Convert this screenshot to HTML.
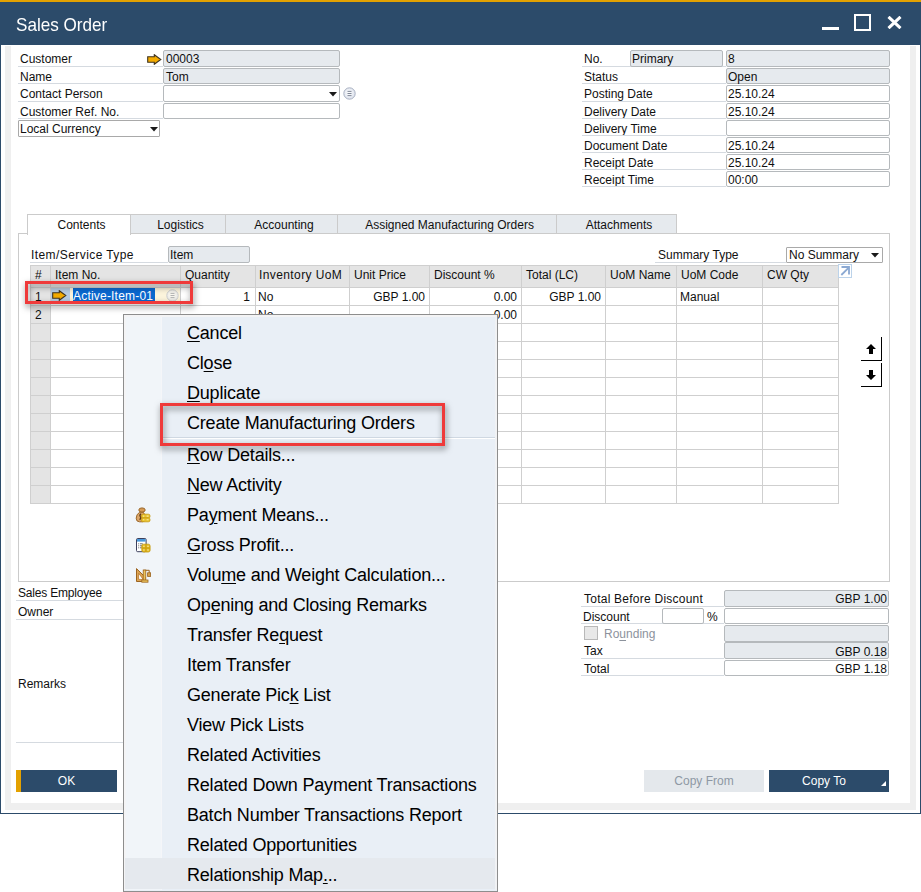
<!DOCTYPE html>
<html><head><meta charset="utf-8"><style>
html,body{margin:0;padding:0;width:921px;height:892px;overflow:hidden;background:#fff}
body>div,body>svg{position:absolute}
.t{font-family:"Liberation Sans",sans-serif;font-size:12px;line-height:14px;color:#101010;white-space:nowrap}
.m{font-family:"Liberation Sans",sans-serif;font-size:18px;line-height:20px;color:#000;white-space:nowrap;letter-spacing:-0.2px}
u{text-decoration-thickness:1px;text-underline-offset:2px}
</style></head><body>
<div style="left:0px;top:0px;width:921px;height:2px;background:#e3a100"></div>
<div style="left:0px;top:2px;width:921px;height:43px;background:#2c4b6a"></div>
<div class="t" style="left:16px;top:13px;font-size:19px;line-height:24px;color:#fff;transform:scaleX(0.9);transform-origin:0 0">Sales Order</div>
<div style="left:822px;top:27px;width:17px;height:3px;background:#fff"></div>
<div style="left:854px;top:14px;width:13px;height:13px;border:2px solid #fff"></div>
<svg style="position:absolute;left:887px;top:16px" width="15" height="13" viewBox="0 0 15 13"><path d="M1.5 0.8 L13.5 12.2 M13.5 0.8 L1.5 12.2" stroke="#fff" stroke-width="3"/></svg>
<div style="left:0px;top:45px;width:1px;height:769px;background:#2c4b6a"></div>
<div style="left:920px;top:45px;width:1px;height:769px;background:#2c4b6a"></div>
<div style="left:0px;top:813px;width:921px;height:1px;background:#2c4b6a"></div>
<div style="left:5px;top:46px;width:6px;height:764px;background:#efefef"></div>
<div style="left:910px;top:46px;width:6px;height:764px;background:#efefef"></div>
<div style="left:5px;top:803px;width:911px;height:7px;background:#efefef"></div>
<div class="t" style="left:20px;top:52px;">Customer</div>
<div style="left:18px;top:66px;width:145px;height:1px;background:#d5dae0"></div>
<div style="left:163px;top:50px;width:175px;height:15px;border:1px solid #b5b9bc;border-radius:2px;background:#e6eaee"></div>
<div class="t" style="left:166px;top:52px;">00003</div>
<div class="t" style="left:20px;top:70px;">Name</div>
<div style="left:18px;top:83px;width:145px;height:1px;background:#d5dae0"></div>
<div style="left:163px;top:68px;width:175px;height:14px;border:1px solid #b5b9bc;border-radius:2px;background:#e6eaee"></div>
<div class="t" style="left:166px;top:70px;">Tom</div>
<div class="t" style="left:20px;top:87px;">Contact Person</div>
<div style="left:18px;top:101px;width:145px;height:1px;background:#d5dae0"></div>
<div style="left:163px;top:85px;width:175px;height:15px;border:1px solid #b5b9bc;border-radius:2px;background:#fff"></div>
<div class="t" style="left:20px;top:105px;">Customer Ref. No.</div>
<div style="left:18px;top:118px;width:145px;height:1px;background:#d5dae0"></div>
<div style="left:163px;top:103px;width:175px;height:14px;border:1px solid #b5b9bc;border-radius:2px;background:#fff"></div>
<svg style="position:absolute;left:147px;top:54px" width="15" height="11" viewBox="0 0 15 11"><path d="M0.7 2.7 H7.3 V0.7 L13.8 5.5 L7.3 10.3 V8.3 H0.7 Z" fill="#f3ab00" stroke="#3e3320" stroke-width="1.1" stroke-linejoin="miter"/></svg>
<svg style="position:absolute;left:329px;top:92px" width="8" height="5" viewBox="0 0 8 5"><path d="M0 0 H8 L4 4.5 Z" fill="#1a1a1a"/></svg>
<svg style="position:absolute;left:343px;top:87px" width="13" height="13" viewBox="0 0 13 13"><defs><radialGradient id="lg34387" cx="0.45" cy="0.45" r="0.6"><stop offset="0" stop-color="#ffffff"/><stop offset="1" stop-color="#d8deea"/></radialGradient></defs><circle cx="6.5" cy="6.5" r="5.7" fill="url(#lg34387)" stroke="#a9b1c2" stroke-width="1"/><path d="M4.5 4.4 H8.5 M4.5 6.5 H8.5 M4.5 8.6 H8.5" stroke="#808898" stroke-width="1"/></svg>
<div style="left:18px;top:120px;width:140px;height:15px;border:1px solid #a9a9a9;border-radius:1px;background:#fff"></div>
<div class="t" style="left:20px;top:122px;">Local Currency</div>
<svg style="position:absolute;left:150px;top:127px" width="8" height="5" viewBox="0 0 8 5"><path d="M0 0 H8 L4 4.5 Z" fill="#1a1a1a"/></svg>
<div class="t" style="left:584px;top:52px;">No.</div>
<div style="left:582px;top:66px;width:144px;height:1px;background:#d5dae0"></div>
<div style="left:726px;top:50px;width:162px;height:15px;border:1px solid #b5b9bc;border-radius:2px;background:#e6eaee"></div>
<div class="t" style="left:728px;top:52px;">8</div>
<div class="t" style="left:584px;top:70px;">Status</div>
<div style="left:582px;top:83px;width:144px;height:1px;background:#d5dae0"></div>
<div style="left:726px;top:68px;width:162px;height:14px;border:1px solid #b5b9bc;border-radius:2px;background:#e6eaee"></div>
<div class="t" style="left:728px;top:70px;">Open</div>
<div class="t" style="left:584px;top:87px;">Posting Date</div>
<div style="left:582px;top:101px;width:144px;height:1px;background:#d5dae0"></div>
<div style="left:726px;top:85px;width:162px;height:15px;border:1px solid #b5b9bc;border-radius:2px;background:#fff"></div>
<div class="t" style="left:728px;top:87px;">25.10.24</div>
<div class="t" style="left:584px;top:105px;">Delivery Date</div>
<div style="left:582px;top:118px;width:144px;height:1px;background:#d5dae0"></div>
<div style="left:726px;top:103px;width:162px;height:14px;border:1px solid #b5b9bc;border-radius:2px;background:#fff"></div>
<div class="t" style="left:728px;top:105px;">25.10.24</div>
<div class="t" style="left:584px;top:122px;">Delivery Time</div>
<div style="left:582px;top:135px;width:144px;height:1px;background:#d5dae0"></div>
<div style="left:726px;top:120px;width:162px;height:14px;border:1px solid #b5b9bc;border-radius:2px;background:#fff"></div>
<div class="t" style="left:584px;top:139px;">Document Date</div>
<div style="left:582px;top:152px;width:144px;height:1px;background:#d5dae0"></div>
<div style="left:726px;top:137px;width:162px;height:14px;border:1px solid #b5b9bc;border-radius:2px;background:#fff"></div>
<div class="t" style="left:728px;top:139px;">25.10.24</div>
<div class="t" style="left:584px;top:156px;">Receipt Date</div>
<div style="left:582px;top:169px;width:144px;height:1px;background:#d5dae0"></div>
<div style="left:726px;top:154px;width:162px;height:14px;border:1px solid #b5b9bc;border-radius:2px;background:#fff"></div>
<div class="t" style="left:728px;top:156px;">25.10.24</div>
<div class="t" style="left:584px;top:173px;">Receipt Time</div>
<div style="left:582px;top:186px;width:144px;height:1px;background:#d5dae0"></div>
<div style="left:726px;top:171px;width:162px;height:14px;border:1px solid #b5b9bc;border-radius:2px;background:#fff"></div>
<div class="t" style="left:728px;top:173px;">00:00</div>
<div style="left:630px;top:50px;width:91px;height:15px;border:1px solid #b5b9bc;border-radius:2px;background:#e6eaee"></div>
<div class="t" style="left:632px;top:52px;">Primary</div>
<div style="left:18px;top:233px;width:870px;height:347px;border:1px solid #cbcbcb;background:#fff"></div>
<div style="left:27px;top:214px;width:102px;height:20px;border:1px solid #cbcbcb;border-bottom:none;background:#fff"></div>
<div class="t" style="left:30px;top:218px;width:103px;text-align:center;">Contents</div>
<div style="left:130px;top:214px;width:94px;height:18px;border:1px solid #cbcbcb;background:#e6eaee"></div>
<div class="t" style="left:133px;top:218px;width:95px;text-align:center;">Logistics</div>
<div style="left:225px;top:214px;width:111px;height:18px;border:1px solid #cbcbcb;background:#e6eaee"></div>
<div class="t" style="left:228px;top:218px;width:112px;text-align:center;">Accounting</div>
<div style="left:337px;top:214px;width:218px;height:18px;border:1px solid #cbcbcb;background:#e6eaee"></div>
<div class="t" style="left:340px;top:218px;width:219px;text-align:center;">Assigned Manufacturing Orders</div>
<div style="left:556px;top:214px;width:119px;height:18px;border:1px solid #cbcbcb;background:#e6eaee"></div>
<div class="t" style="left:559px;top:218px;width:120px;text-align:center;">Attachments</div>
<div class="t" style="left:31px;top:248px;letter-spacing:0.42px">Item/Service Type</div>
<div style="left:30px;top:262px;width:138px;height:1px;background:#d5dae0"></div>
<div style="left:168px;top:246px;width:80px;height:15px;border:1px solid #b5b9bc;border-radius:2px;background:#e6eaee"></div>
<div class="t" style="left:170px;top:248px;">Item</div>
<div class="t" style="left:658px;top:248px;">Summary Type</div>
<div style="left:655px;top:262px;width:131px;height:1px;background:#d5dae0"></div>
<div style="left:786px;top:247px;width:95px;height:14px;border:1px solid #a9a9a9;border-radius:1px;background:#fff"></div>
<div class="t" style="left:789px;top:248px;">No Summary</div>
<svg style="position:absolute;left:871px;top:253px" width="8" height="5" viewBox="0 0 8 5"><path d="M0 0 H8 L4 4.5 Z" fill="#1a1a1a"/></svg>
<div style="left:30px;top:265px;width:808px;height:22px;background:#e4e4e4"></div>
<div style="left:30px;top:287px;width:20px;height:216px;background:#e4e4e4"></div>
<div style="left:30px;top:265px;width:809px;height:1px;background:#cfcfcf"></div>
<div style="left:30px;top:287px;width:809px;height:1px;background:#cfcfcf"></div>
<div style="left:30px;top:305px;width:809px;height:1px;background:#cfcfcf"></div>
<div style="left:30px;top:323px;width:809px;height:1px;background:#cfcfcf"></div>
<div style="left:30px;top:341px;width:809px;height:1px;background:#cfcfcf"></div>
<div style="left:30px;top:359px;width:809px;height:1px;background:#cfcfcf"></div>
<div style="left:30px;top:377px;width:809px;height:1px;background:#cfcfcf"></div>
<div style="left:30px;top:395px;width:809px;height:1px;background:#cfcfcf"></div>
<div style="left:30px;top:413px;width:809px;height:1px;background:#cfcfcf"></div>
<div style="left:30px;top:431px;width:809px;height:1px;background:#cfcfcf"></div>
<div style="left:30px;top:449px;width:809px;height:1px;background:#cfcfcf"></div>
<div style="left:30px;top:467px;width:809px;height:1px;background:#cfcfcf"></div>
<div style="left:30px;top:485px;width:809px;height:1px;background:#cfcfcf"></div>
<div style="left:30px;top:503px;width:809px;height:1px;background:#cfcfcf"></div>
<div style="left:30px;top:265px;width:1px;height:239px;background:#cfcfcf"></div>
<div style="left:50px;top:265px;width:1px;height:239px;background:#cfcfcf"></div>
<div style="left:180px;top:265px;width:1px;height:239px;background:#cfcfcf"></div>
<div style="left:255px;top:265px;width:1px;height:239px;background:#cfcfcf"></div>
<div style="left:349px;top:265px;width:1px;height:239px;background:#cfcfcf"></div>
<div style="left:429px;top:265px;width:1px;height:239px;background:#cfcfcf"></div>
<div style="left:521px;top:265px;width:1px;height:239px;background:#cfcfcf"></div>
<div style="left:605px;top:265px;width:1px;height:239px;background:#cfcfcf"></div>
<div style="left:676px;top:265px;width:1px;height:239px;background:#cfcfcf"></div>
<div style="left:762px;top:265px;width:1px;height:239px;background:#cfcfcf"></div>
<div style="left:838px;top:265px;width:1px;height:239px;background:#cfcfcf"></div>
<div class="t" style="left:35px;top:268px;">#</div>
<div class="t" style="left:55px;top:268px;">Item No.</div>
<div class="t" style="left:185px;top:268px;">Quantity</div>
<div class="t" style="left:259px;top:268px;letter-spacing:0.4px">Inventory UoM</div>
<div class="t" style="left:354px;top:268px;">Unit Price</div>
<div class="t" style="left:434px;top:268px;">Discount %</div>
<div class="t" style="left:526px;top:268px;">Total (LC)</div>
<div class="t" style="left:610px;top:268px;">UoM Name</div>
<div class="t" style="left:681px;top:268px;">UoM Code</div>
<div class="t" style="left:767px;top:268px;">CW Qty</div>
<div class="t" style="left:35px;top:290px;">1</div>
<div class="t" style="left:35px;top:308px;">2</div>
<div style="left:51px;top:288px;width:19px;height:13px;background:#b7cce2"></div>
<div style="left:70px;top:288px;width:110px;height:13px;background:#fcf4dc"></div>
<svg style="position:absolute;left:52px;top:290px" width="15" height="11" viewBox="0 0 15 11"><path d="M0.7 2.7 H7.3 V0.7 L13.8 5.5 L7.3 10.3 V8.3 H0.7 Z" fill="#f3ab00" stroke="#3e3320" stroke-width="1.1" stroke-linejoin="miter"/></svg>
<div style="left:73px;top:288px;width:82px;height:13px;background:#0a68d0"></div>
<div class="t" style="left:73px;top:289px;color:#fff;letter-spacing:0.2px">Active-Item-01</div>
<div style="left:166px;top:289px;width:13px;height:13px;opacity:0.6">
<svg style="position:absolute;left:0px;top:0px" width="13" height="13" viewBox="0 0 13 13"><defs><radialGradient id="lg00" cx="0.45" cy="0.45" r="0.6"><stop offset="0" stop-color="#ffffff"/><stop offset="1" stop-color="#d8deea"/></radialGradient></defs><circle cx="6.5" cy="6.5" r="5.7" fill="url(#lg00)" stroke="#a9b1c2" stroke-width="1"/><path d="M4.5 4.4 H8.5 M4.5 6.5 H8.5 M4.5 8.6 H8.5" stroke="#808898" stroke-width="1"/></svg>
</div>
<div class="t" style="left:-50px;top:290px;width:300px;text-align:right;">1</div>
<div class="t" style="left:258px;top:290px;">No</div>
<div class="t" style="left:125px;top:290px;width:300px;text-align:right;">GBP 1.00</div>
<div class="t" style="left:217px;top:290px;width:300px;text-align:right;">0.00</div>
<div class="t" style="left:301px;top:290px;width:300px;text-align:right;">GBP 1.00</div>
<div class="t" style="left:680px;top:290px;">Manual</div>
<div class="t" style="left:258px;top:308px;">No</div>
<div class="t" style="left:217px;top:308px;width:300px;text-align:right;">0.00</div>
<svg style="position:absolute;left:838px;top:264px" width="14" height="14" viewBox="0 0 14 14"><rect x="0.5" y="0.5" width="13" height="13" fill="#fff" stroke="#bcd3ea"/><path d="M3.3 11 L10.5 3.8" stroke="#8aa8d2" stroke-width="1.8"/><path d="M3.5 3 H11 V10.5" stroke="#8aa8d2" stroke-width="1.8" fill="none"/></svg>
<div style="left:25px;top:281px;width:162px;height:17px;border:3px solid #ef3a3a;filter:drop-shadow(1px 3px 3px rgba(0,0,0,0.5))"></div>
<div style="left:881px;top:337px;width:1px;height:24px;background:#000"></div>
<div style="left:861px;top:360px;width:21px;height:1px;background:#000"></div>
<svg style="position:absolute;left:866px;top:344px" width="10" height="10" viewBox="0 0 10 10"><path d="M5 0 L10 5 H7 V10 H3 V5 H0 Z" fill="#000"/></svg>
<div style="left:881px;top:363px;width:1px;height:24px;background:#000"></div>
<div style="left:861px;top:386px;width:21px;height:1px;background:#000"></div>
<svg style="position:absolute;left:866px;top:370px" width="10" height="10" viewBox="0 0 10 10"><path d="M5 10 L10 5 H7 V0 H3 V5 H0 Z" fill="#000"/></svg>
<div class="t" style="left:18px;top:586px;letter-spacing:-0.2px">Sales Employee</div>
<div style="left:16px;top:600px;width:479px;height:1px;background:#d5dae0"></div>
<div class="t" style="left:18px;top:605px;">Owner</div>
<div style="left:16px;top:619px;width:479px;height:1px;background:#d5dae0"></div>
<div class="t" style="left:18px;top:677px;">Remarks</div>
<div style="left:16px;top:742px;width:479px;height:1px;background:#d5dae0"></div>
<div style="left:16px;top:770px;width:101px;height:22px;background:#2c4b6a"></div>
<div style="left:16px;top:770px;width:5px;height:22px;background:#e3a100"></div>
<div class="t" style="left:16px;top:774px;width:101px;text-align:center;color:#fff">OK</div>
<div class="t" style="left:584px;top:592px;letter-spacing:0.24px">Total Before Discount</div>
<div style="left:581px;top:606px;width:143px;height:1px;background:#d5dae0"></div>
<div style="left:724px;top:590px;width:163px;height:15px;border:1px solid #b5b9bc;border-radius:2px;background:#e6eaee"></div>
<div class="t" style="left:587px;top:592px;width:300px;text-align:right;">GBP 1.00</div>
<div class="t" style="left:583px;top:610px;">Discount</div>
<div style="left:581px;top:623px;width:143px;height:1px;background:#d5dae0"></div>
<div style="left:662px;top:608px;width:40px;height:14px;border:1px solid #b5b9bc;border-radius:2px;background:#fff"></div>
<div class="t" style="left:707px;top:610px;">%</div>
<div style="left:724px;top:608px;width:163px;height:14px;border:1px solid #b5b9bc;border-radius:2px;background:#fff"></div>
<div style="left:584px;top:626px;width:12px;height:12px;border:1px solid #b8b8b8;background:#e8e8e8"></div>
<div class="t" style="left:604px;top:627px;color:#8c929c">Ro<u>u</u>nding</div>
<div style="left:724px;top:625px;width:163px;height:15px;border:1px solid #b5b9bc;border-radius:2px;background:#e6eaee"></div>
<div class="t" style="left:584px;top:644px;">Tax</div>
<div style="left:581px;top:658px;width:143px;height:1px;background:#d5dae0"></div>
<div style="left:724px;top:642px;width:163px;height:15px;border:1px solid #b5b9bc;border-radius:2px;background:#e6eaee"></div>
<div class="t" style="left:587px;top:645px;width:300px;text-align:right;">GBP 0.18</div>
<div class="t" style="left:584px;top:662px;">Total</div>
<div style="left:581px;top:675px;width:143px;height:1px;background:#d5dae0"></div>
<div style="left:724px;top:660px;width:163px;height:14px;border:1px solid #b5b9bc;border-radius:2px;background:#fff"></div>
<div class="t" style="left:587px;top:662px;width:300px;text-align:right;">GBP 1.18</div>
<div style="left:644px;top:770px;width:120px;height:22px;background:#e4e8ec"></div>
<div class="t" style="left:644px;top:774px;width:120px;text-align:center;color:#8e98a4">Copy From</div>
<div style="left:769px;top:770px;width:120px;height:22px;background:#2c4b6a"></div>
<div class="t" style="left:764px;top:774px;width:120px;text-align:center;color:#fff">Copy To</div>
<svg style="position:absolute;left:881px;top:781px" width="5" height="5" viewBox="0 0 5 5"><path d="M5 0 V5 H0 Z" fill="#fff"/></svg>
<div style="left:123px;top:314px;width:373px;height:576px;border:1px solid #8d8d8d;background:#e9eff6"></div>
<div style="left:124px;top:315px;width:372px;height:2px;background:#f4f4f5"></div>
<div style="left:124px;top:315px;width:2px;height:575px;background:#f4f4f5"></div>
<div style="left:126px;top:317px;width:35px;height:573px;background:#f1f5f9"></div>
<div style="left:161px;top:317px;width:1px;height:573px;background:#f5f6f9"></div>
<div style="left:125px;top:858px;width:370px;height:31px;background:#e5e9ee"></div>
<div style="left:495px;top:315px;width:2px;height:575px;background:#f1f2f4"></div>
<div class="m" style="left:187px;top:323px"><u>C</u>ancel</div>
<div class="m" style="left:187px;top:353px">Cl<u>o</u>se</div>
<div class="m" style="left:187px;top:383px"><u>D</u>uplicate</div>
<div class="m" style="left:187px;top:413px">Create Manufacturing Orders</div>
<div class="m" style="left:187px;top:445px"><u>R</u>ow Details...</div>
<div class="m" style="left:187px;top:475px"><u>N</u>ew Activity</div>
<div class="m" style="left:187px;top:505px">Pa<u>y</u>ment Means...</div>
<div class="m" style="left:187px;top:535px"><u>G</u>ross Profit...</div>
<div class="m" style="left:187px;top:565px">Volu<u>m</u>e and Weight Calculation...</div>
<div class="m" style="left:187px;top:595px">Op<u>e</u>ning and Closing Remarks</div>
<div class="m" style="left:187px;top:625px">Transfer Re<u>q</u>uest</div>
<div class="m" style="left:187px;top:655px">Item Transfer</div>
<div class="m" style="left:187px;top:685px">Generate Pic<u>k</u> List</div>
<div class="m" style="left:187px;top:715px">View Pick Lists</div>
<div class="m" style="left:187px;top:745px">Related Activities</div>
<div class="m" style="left:187px;top:775px">Related Down Payment Transactions</div>
<div class="m" style="left:187px;top:805px">Batch Number Transactions Report</div>
<div class="m" style="left:187px;top:835px">Related Opportunities</div>
<div class="m" style="left:187px;top:865px">Relationship Map<u>.</u>..</div>
<div style="left:162px;top:437px;width:333px;height:1px;background:#cfd8e2"></div>
<div style="left:162px;top:438px;width:333px;height:1px;background:#ffffff"></div>
<svg style="position:absolute;left:135px;top:507px" width="16" height="16" viewBox="0 0 16 16">
<path d="M4.6 5.2 Q1.2 7.5 1.2 11.2 Q1.2 14.8 4.5 14.8 H8 Q10.5 14.5 10.5 10.8 Q10.3 7.4 8.2 5.2 Z" fill="#dba66a" stroke="#9a6628" stroke-width="1"/>
<ellipse cx="7" cy="3" rx="3.2" ry="2.1" fill="#d59a55" stroke="#9a6628" stroke-width="1"/>
<path d="M6.2 6.8 Q4.2 7.8 5.4 9.6 Q6.6 11.2 4.6 12.6" stroke="#5a3510" stroke-width="1.4" fill="none"/>
<rect x="6.4" y="7.2" width="8.6" height="3.9" rx="1.6" fill="#e8c22c" stroke="#c89a12" stroke-width="0.8"/>
<rect x="6.4" y="10.9" width="8.6" height="3.9" rx="1.6" fill="#e8c22c" stroke="#c89a12" stroke-width="0.8"/>
<path d="M8 9.1 H9.3 M11.6 9.1 H13.6 M8 12.8 H9.3 M11.6 12.8 H13.6" stroke="#f7e7a6" stroke-width="1.1"/>
</svg>
<svg style="position:absolute;left:135px;top:537px" width="16" height="16" viewBox="0 0 16 16">
<rect x="1.5" y="1.5" width="9.6" height="13.2" rx="1.2" fill="#fff" stroke="#3c3f5c" stroke-width="1"/>
<rect x="2" y="2" width="8.6" height="2.6" fill="#4898dc"/>
<path d="M3 6.8 H3.8 M4.8 6.8 H7.8 M3 8.8 H3.8 M4.8 8.8 H7.2 M3 10.8 H3.8 M4.8 10.8 H6.8" stroke="#6c6c6c" stroke-width="1"/>
<rect x="6.8" y="7.2" width="8.3" height="7.8" rx="1.8" fill="#e2b81e" stroke="#c59a10" stroke-width="0.8"/>
<path d="M10.9 7.3 V15 M6.9 11.1 H15" stroke="#c59a10" stroke-width="0.8"/>
<path d="M8 9.2 H9.8 M12 9.2 H14 M8 13 H9.8 M12 13 H14" stroke="#f5e39c" stroke-width="1.1"/>
</svg>
<svg style="position:absolute;left:135px;top:567px" width="16" height="16" viewBox="0 0 16 16">
<path d="M1.5 1.6 L10.5 10.5 V14.5 H1.5 Z" fill="#dca455" stroke="#9c6420" stroke-width="1"/>
<path d="M3.6 6.2 V12.4 H8.2 Z" fill="#ffffff" stroke="#b77a30" stroke-width="0.8"/>
<path d="M8.5 3.3 H14.2 V6" stroke="#9c6420" stroke-width="1" fill="none"/>
<rect x="8.2" y="3" width="2.6" height="10.5" fill="#ecc35a" stroke="#9c6420" stroke-width="0.8"/>
<rect x="6.8" y="13" width="6.2" height="2.2" fill="#ecc35a" stroke="#9c6420" stroke-width="0.8"/>
<rect x="12.6" y="5.8" width="3" height="3.6" fill="#d6a048" stroke="#9c6420" stroke-width="0.8"/>
</svg>
<div style="left:160px;top:403px;width:279px;height:37px;border:3px solid #ef3a3a;filter:drop-shadow(1px 3px 3px rgba(0,0,0,0.5))"></div>
</body></html>
